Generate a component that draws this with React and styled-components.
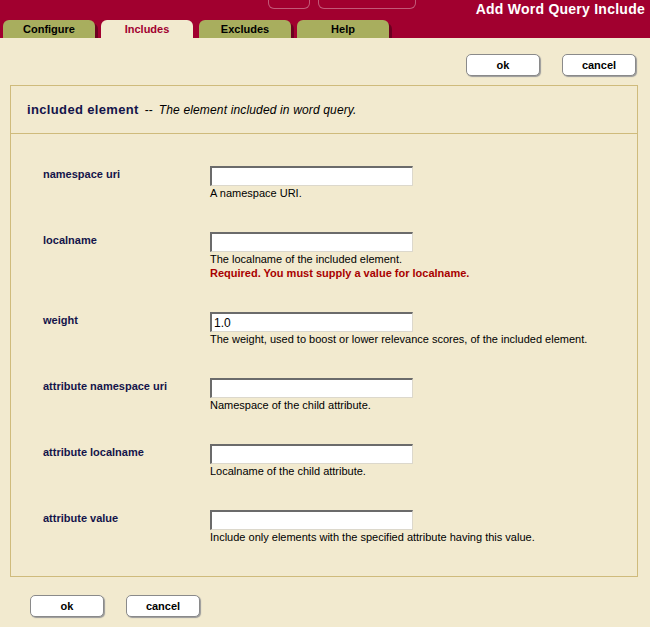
import React from 'react';
import styled, { createGlobalStyle } from 'styled-components';

const GlobalStyle = createGlobalStyle`
  html, body {
    margin: 0;
    padding: 0;
    background: #f2eacf;
    font-family: 'Liberation Sans', Arial, sans-serif;
  }
`;

const Page = styled.div`
  width: 650px;
  min-height: 627px;
  background: #f2eacf;
`;

const Header = styled.div`
  height: 38px;
  background: #a1002f;
  display: flex;
  flex-direction: column;
  justify-content: space-between;
  overflow: hidden;
`;

const TopRow = styled.div`
  display: flex;
  align-items: flex-start;
`;

const Nubs = styled.div`
  display: flex;
  gap: 8px;
  margin-left: 268px;
`;

const Nub = styled.div`
  width: ${(p) => p.w}px;
  height: 8px;
  border: 1px solid rgba(255, 255, 255, 0.35);
  border-top: none;
  border-radius: 0 0 6px 6px;
`;

const Title = styled.h1`
  margin: 1px 5px 0 auto;
  font-size: 14px;
  line-height: 16px;
  font-weight: bold;
  letter-spacing: 0.25px;
  color: #fff;
`;

const Tabs = styled.div`
  display: flex;
  gap: 6px;
  padding-left: 3px;
`;

const Tab = styled.div`
  width: 92px;
  height: 18px;
  border-radius: 6px 6px 0 0;
  background: ${(p) => (p.active ? '#f2eacf' : '#a8ae5e')};
  color: ${(p) => (p.active ? '#a1002f' : '#000')};
  box-shadow: ${(p) => (p.active ? 'none' : '3px 3px 0 #6c0020')};
  font-size: 11px;
  font-weight: bold;
  line-height: 19px;
  text-align: center;
`;

const TopActions = styled.div`
  display: flex;
  justify-content: flex-end;
  gap: 22px;
  padding: 16px 14px 0 0;
`;

const BottomActions = styled.div`
  display: flex;
  gap: 22px;
  padding: 18px 0 0 30px;
`;

const Button = styled.button`
  width: 74px;
  height: 22px;
  padding: 0;
  background: #fff;
  border: 1px solid #8a8a8a;
  border-radius: 5px;
  box-shadow: 1px 1px 1px #9a9a9a;
  font-family: 'Liberation Sans', Arial, sans-serif;
  font-size: 11px;
  font-weight: bold;
  color: #000;
`;

const Panel = styled.div`
  margin: 9px 12px 0 10px;
  border: 1px solid #cfbb7c;
`;

const PanelHead = styled.div`
  height: 47px;
  border-bottom: 1px solid #cfbb7c;
  display: flex;
  align-items: center;
  padding-left: 16px;
  gap: 6px;
`;

const HeadName = styled.span`
  font-size: 13px;
  font-weight: bold;
  letter-spacing: 0.35px;
  color: #14144a;
`;

const HeadSep = styled.span`
  font-size: 12px;
  color: #000;
`;

const HeadDesc = styled.span`
  font-size: 12px;
  font-style: italic;
  letter-spacing: 0.15px;
  color: #000;
`;

const Rows = styled.div`
  padding: 32px 0 0 32px;
`;

const Row = styled.div`
  display: grid;
  grid-template-columns: 167px 1fr;
  padding-bottom: 32px;
`;

const Label = styled.div`
  font-size: 11px;
  font-weight: bold;
  color: #14144a;
  line-height: 14px;
  padding-top: 1px;
`;

const Field = styled.div`
  display: flex;
  flex-direction: column;
`;

const Input = styled.input`
  box-sizing: border-box;
  width: 203px;
  height: 20px;
  margin: 0;
  padding: 1px 2px 0;
  background: #fff;
  border-top: 2px solid #6b6b6b;
  border-left: 2px solid #6b6b6b;
  border-right: 1px solid #dcd8cc;
  border-bottom: 1px solid #dcd8cc;
  font-family: 'Liberation Sans', Arial, sans-serif;
  font-size: 12px;
  color: #000;
  outline: none;
`;

const Help = styled.div`
  font-size: 11px;
  line-height: 14px;
  color: ${(p) => (p.error ? '#a80000' : '#000')};
  font-weight: ${(p) => (p.error ? 'bold' : 'normal')};
`;

const fields = [
  { label: 'namespace uri', help: 'A namespace URI.' },
  {
    label: 'localname',
    help: 'The localname of the included element.',
    error: 'Required. You must supply a value for localname.',
  },
  {
    label: 'weight',
    value: '1.0',
    help: 'The weight, used to boost or lower relevance scores, of the included element.',
  },
  { label: 'attribute namespace uri', help: 'Namespace of the child attribute.' },
  { label: 'attribute localname', help: 'Localname of the child attribute.' },
  {
    label: 'attribute value',
    help: 'Include only elements with the specified attribute having this value.',
  },
];

const tabs = ['Configure', 'Includes', 'Excludes', 'Help'];

export default function App() {
  return (
    <Page>
      <GlobalStyle />
      <Header>
        <TopRow>
          <Nubs>
            <Nub w={40} />
            <Nub w={96} />
          </Nubs>
          <Title>Add Word Query Include</Title>
        </TopRow>
        <Tabs>
          {tabs.map((t) => (
            <Tab key={t} active={t === 'Includes'}>
              {t}
            </Tab>
          ))}
        </Tabs>
      </Header>

      <TopActions>
        <Button>ok</Button>
        <Button>cancel</Button>
      </TopActions>

      <Panel>
        <PanelHead>
          <HeadName>included element</HeadName>
          <HeadSep>--</HeadSep>
          <HeadDesc>The element included in word query.</HeadDesc>
        </PanelHead>
        <Rows>
          {fields.map((f) => (
            <Row key={f.label}>
              <Label>{f.label}</Label>
              <Field>
                <Input type="text" defaultValue={f.value || ''} />
                <Help>{f.help}</Help>
                {f.error && <Help error>{f.error}</Help>}
              </Field>
            </Row>
          ))}
        </Rows>
      </Panel>

      <BottomActions>
        <Button>ok</Button>
        <Button>cancel</Button>
      </BottomActions>
    </Page>
  );
}
